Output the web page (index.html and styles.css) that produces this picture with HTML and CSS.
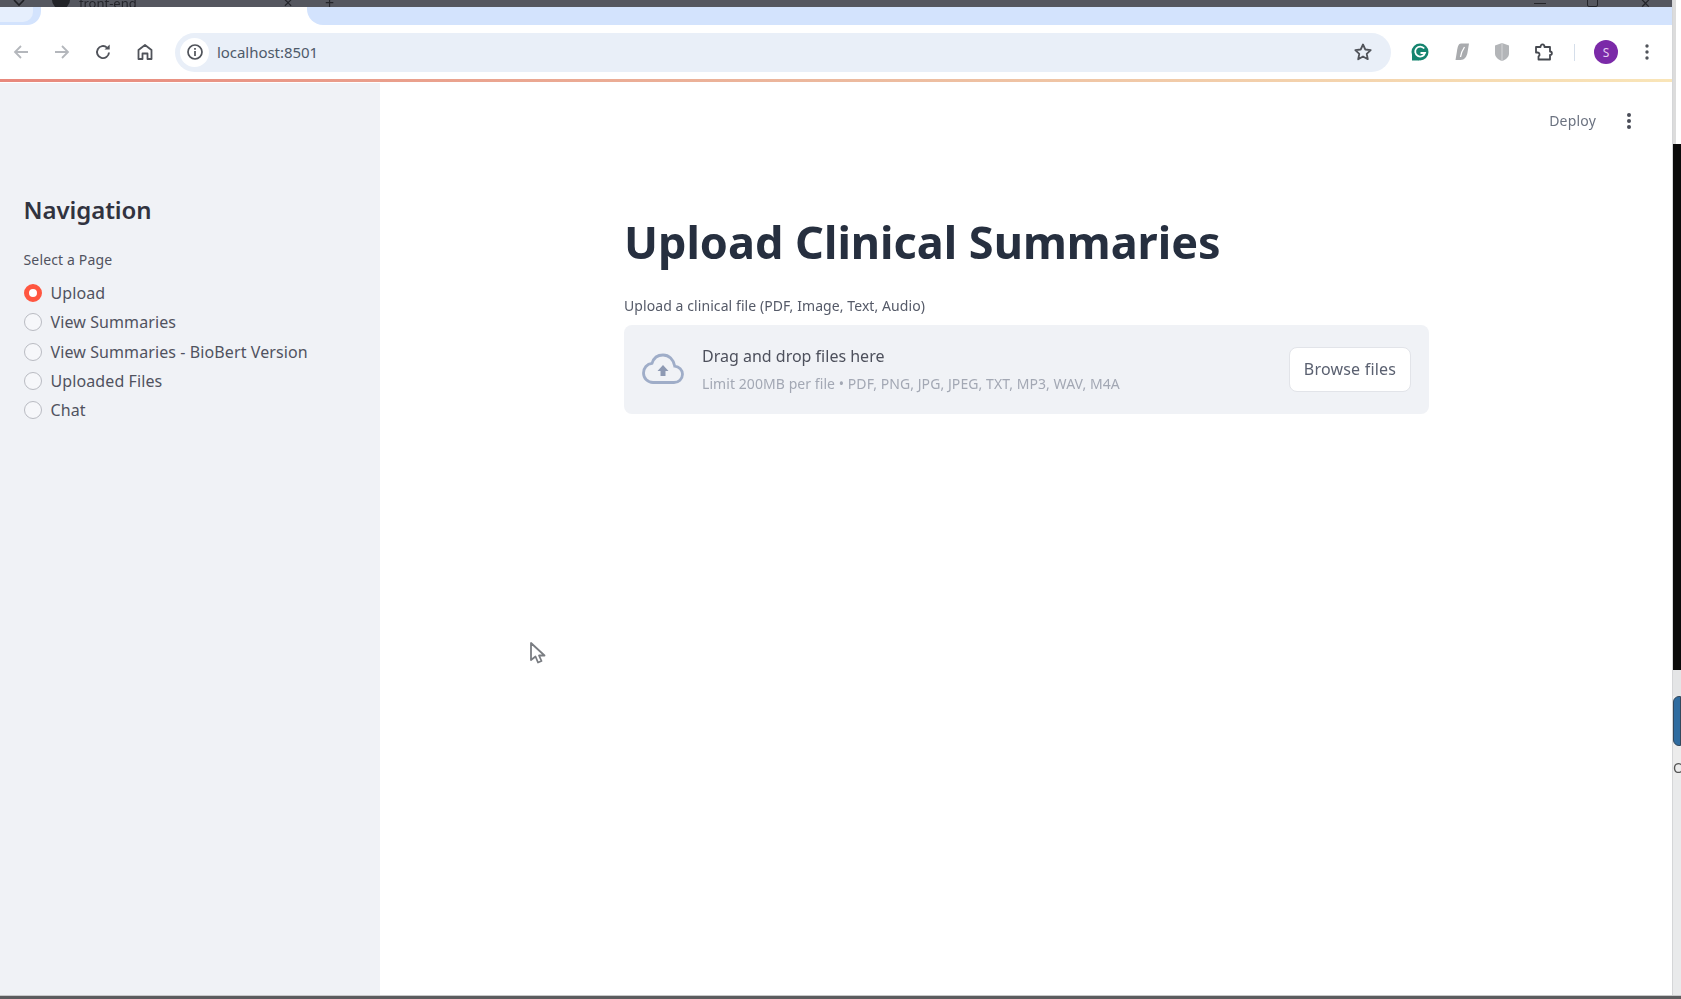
FILE: index.html
```html
<!DOCTYPE html>
<html lang="en">
<head>
<meta charset="utf-8">
<title>front-end</title>
<link rel="stylesheet" href="styles.css">
</head>
<body>
<div class="screen">
  <div class="window">
    <div class="titlebar">
      <svg class="tb-chev" width="14" height="14" viewBox="0 0 14 14"><path d="M2 0l5 5 5-5" fill="none" stroke="#1f2024" stroke-width="1.6"/></svg>
      <span class="tb-fav"></span>
      <span class="tb-name">front-end</span>
      <span class="tb-x">✕</span>
      <span class="tb-plus">+</span>
      <span class="tb-spacer"></span>
      <span class="tb-min"></span>
      <span class="tb-max"></span>
      <span class="tb-close">✕</span>
    </div>
    <div class="tabstrip">
      <div class="tab-left"><span class="tab-left-inner"></span></div>
      <div class="tab-active"></div>
      <div class="tab-rest"></div>
    </div>
    <div class="toolbar">
      <svg class="ic ic-back" width="18" height="18" viewBox="0 0 18 18"><path d="M16 9H3M9 3L3 9l6 6" fill="none" stroke="#b4b7bc" stroke-width="1.8"/></svg>
      <svg class="ic ic-fwd" width="18" height="18" viewBox="0 0 18 18"><path d="M2 9h13M9 3l6 6-6 6" fill="none" stroke="#b4b7bc" stroke-width="1.8"/></svg>
      <svg class="ic ic-reload" width="18" height="18" viewBox="0 0 18 18"><path d="M15 9.500A6 6 0 1 1 13 4.600" fill="none" stroke="#50535a" stroke-width="1.900"/><path d="M10.500 6.600h5.200V1.400z" fill="#50535a"/></svg>
      <svg class="ic ic-home" width="18" height="18" viewBox="0 0 18 18"><path d="M2.500 16V7L9 2l6.500 5v9h-4v-5.500h-5V16z" fill="none" stroke="#50535a" stroke-width="1.800" stroke-linejoin="round"/></svg>
      <div class="omnibox">
        <span class="site-info"><svg width="18" height="18" viewBox="0 0 18 18"><circle cx="9" cy="9" r="7" fill="none" stroke="#50535a" stroke-width="1.700"/><path d="M9 8v5M9 5v1.700" stroke="#50535a" stroke-width="1.700"/></svg></span>
        <span class="url">localhost:8501</span>
        <svg class="star" width="20" height="20" viewBox="0 0 20 20"><path d="M10 2.500l2.300 5 5.400.6-4 3.700 1.100 5.400L10 14.500l-4.800 2.700 1.100-5.400-4-3.700 5.400-.6z" fill="none" stroke="#50535a" stroke-width="1.800" stroke-linejoin="round"/></svg>
      </div>
      <div class="extensions">
        <svg class="ext-g" width="20" height="20" viewBox="0 0 20 20"><circle cx="10" cy="10" r="8.500" fill="#15846f"/><path d="M2 18.500h7V12H2z" fill="#15846f"/><path d="M14.200 6.500A5 5 0 1 0 15 11h-4.500" fill="none" stroke="#fff" stroke-width="1.800"/></svg>
        <svg class="ext-s" width="16" height="20" viewBox="0 0 16 20"><path d="M7 1.500h8l-1.500 9c-.6 4-3 7.500-7 7.500H1.500L3 9c.6-4 1.500-7.500 4-7.500z" fill="#a9abae"/><path d="M10.500 5C8.500 8 7 11 6.500 15" fill="none" stroke="#fff" stroke-width="1.300"/></svg>
        <svg class="ext-h" width="16" height="20" viewBox="0 0 16 20"><path d="M8 1l7 2.500v8c0 3.500-3 6-7 7.500-4-1.500-7-4-7-7.500v-8z" fill="#b3b5b8"/><path d="M8 1v18" stroke="#d4d5d7" stroke-width="1"/></svg>
        <svg class="ext-p" width="20" height="20" viewBox="0 0 20 20"><path d="M2 5h4.500c0-3.500 4-3.500 4 0H16v4.500c2.500 0 2.500 3.500 0 3.500v4.500H4.500v-3c2-1.500 1-4-1-4H2z" fill="none" stroke="#45484f" stroke-width="1.800" stroke-linejoin="round"/></svg>
        <span class="tb-divider"></span>
        <span class="avatar">S</span>
        <svg class="kebab" width="6" height="18" viewBox="0 0 6 18"><circle cx="3" cy="3" r="1.700" fill="#50535a"/><circle cx="3" cy="9" r="1.700" fill="#50535a"/><circle cx="3" cy="15" r="1.700" fill="#50535a"/></svg>
      </div>
    </div>
    <div class="decoration"></div>
    <div class="app">
      <aside class="sidebar">
        <h2 class="nav-title">Navigation</h2>
        <p class="nav-label">Select a Page</p>
        <ul class="radio-list">
          <li class="radio-item selected"><span class="radio"></span>Upload</li>
          <li class="radio-item"><span class="radio"></span>View Summaries</li>
          <li class="radio-item"><span class="radio"></span>View Summaries - BioBert Version</li>
          <li class="radio-item"><span class="radio"></span>Uploaded Files</li>
          <li class="radio-item"><span class="radio"></span>Chat</li>
        </ul>
      </aside>
      <main class="content">
        <header class="app-header">
          <span class="deploy">Deploy</span>
          <svg class="app-menu" width="6" height="18" viewBox="0 0 6 18"><circle cx="3" cy="3" r="2" fill="#4a4d58"/><circle cx="3" cy="9" r="2" fill="#4a4d58"/><circle cx="3" cy="15" r="2" fill="#4a4d58"/></svg>
        </header>
        <section class="block">
          <h1 class="page-title">Upload Clinical Summaries</h1>
          <p class="file-label">Upload a clinical file (PDF, Image, Text, Audio)</p>
          <div class="dropzone">
            <svg class="cloud" width="42" height="32" viewBox="0 0 42 32"><path d="M11 29.500h21c4.500 0 8.500-3.500 8.500-8.200 0-4.500-3.400-7.800-7.800-8.200C31.500 6.500 27 2 21 2c-5.500 0-9.500 3.500-11 8.300C5 10.800 1.500 15 1.500 20c0 5.500 4.300 9.500 9.500 9.500z" fill="none" stroke="#9fadc8" stroke-width="2.800"/><path d="M21 12l-5.500 6H18.500v5h5v-5h3z" fill="#8d99b3"/></svg>
            <div class="drop-text">
              <span class="drop-main">Drag and drop files here</span>
              <span class="drop-sub">Limit 200MB per file • PDF, PNG, JPG, JPEG, TXT, MP3, WAV, M4A</span>
            </div>
            <button class="browse" type="button">Browse files</button>
          </div>
        </section>
        <svg class="cursor" width="18" height="24" viewBox="0 0 18 24"><path d="M2 2v17l4.500-3.500L9 21.500l3.500-1.500-2.500-5.500h5.500z" fill="#fff" stroke="#7a7d82" stroke-width="1.800" stroke-linejoin="round"/></svg>
      </main>
    </div>
  </div>
  <div class="edge">
    <div class="edge-white"></div>
    <div class="edge-black"></div>
    <div class="edge-grey1"></div>
    <div class="edge-blue"></div>
    <div class="edge-text">O</div>
    <div class="edge-grey2"></div>
  </div>
</div>
<div class="taskbar"></div>
</body>
</html>
```

FILE: styles.css
```css
* { box-sizing: border-box; }
html, body { margin: 0; height: 100%; overflow: hidden; }
body {
  display: flex;
  flex-direction: column;
  background: #fff;
  font-family: "Noto Sans", "Liberation Sans", sans-serif;
  color: #31333f;
}
.screen { flex: 1; display: flex; min-height: 0; filter: blur(.45px); }
.window { flex: 1; display: flex; flex-direction: column; min-width: 0; border-right: 1px solid #d5d6d8; }
.taskbar { height: 4px; background: #5c5c5e; border-top: 1px solid #c8c9ca; }

.titlebar {
  height: 7px;
  background: #55575f;
  display: flex;
  align-items: flex-start;
  overflow: hidden;
  position: relative;
  font-size: 13px;
  color: #24252a;
  line-height: 8px;
}
.tb-chev { margin: 0 0 0 12px; flex: none; }
.tb-fav { width: 18px; height: 18px; border-radius: 50%; background: #222327; margin: -9px 0 0 26px; flex: none; }
.tb-name { margin-left: 9px; margin-top: -1px; width: 204px; }
.tb-x { font-size: 12px; margin-top: -1px; width: 42px; }
.tb-plus { font-size: 16px; margin-top: -1px; }
.tb-spacer { flex: 1; }
.tb-min { width: 12px; height: 1px; background: #24252a; margin: 3px 41px 0 0; }
.tb-max { width: 11px; height: 9px; margin: -2px 42px 0 0; border: 1px solid #24252a; border-radius: 2px; }
.tb-close { font-size: 13px; margin: -1px 21px 0 0; }

.tabstrip { height: 18px; display: flex; background: #fff; }
.tab-left { width: 41px; background: #d3e3fd; border-bottom-right-radius: 14px; display: flex; align-items: flex-start; }
.tab-left-inner { width: 33px; height: 15px; background: #e6effd; border-bottom-right-radius: 10px; }
.tab-active { width: 266px; background: #fff; }
.tab-rest { flex: 1; background: #d3e3fd; border-bottom-left-radius: 16px; }

.toolbar {
  height: 54px;
  background: #fff;
  display: flex;
  align-items: center;
  padding-left: 12px;
}
.ic { flex: none; }
.ic-fwd { margin-left: 23px; }
.ic-reload { margin-left: 23px; }
.ic-home { margin-left: 24px; }
.omnibox {
  margin-left: 21px;
  width: 1216px;
  height: 39px;
  border-radius: 20px;
  background: #e9eff8;
  display: flex;
  align-items: center;
  padding: 0 18px 0 5px;
}
.site-info { width: 29px; height: 29px; border-radius: 50%; background: #fff; display: flex; align-items: center; justify-content: center; flex: none; }
.url { margin-left: 8px; font-size: 15px; color: #4e5a6a; flex: 1; letter-spacing: -.05px; }
.star { flex: none; }
.extensions { display: flex; align-items: center; flex: 1; }
.ext-g { margin-left: 19px; flex: none; }
.ext-s { margin-left: 24px; flex: none; }
.ext-h { margin-left: 24px; flex: none; }
.ext-p { margin-left: 24px; flex: none; }
.tb-divider { width: 1px; height: 17px; background: #d5deea; margin-left: 20px; flex: none; }
.avatar { width: 24px; height: 24px; border-radius: 50%; background: #7b2aa8; color: #e6cdf2; font-size: 12px; display: flex; align-items: center; justify-content: center; margin-left: 19px; flex: none; }
.kebab { margin-left: 26px; flex: none; }

.decoration { height: 3px; margin-bottom: 1px; background: linear-gradient(90deg, #e8887c, #ecb99e 50%, #f9e5b8); flex: none; }

.app { flex: 1; display: flex; min-height: 0; }
.sidebar { width: 380px; flex: none; background: #f0f2f6; padding: 111px 24px 0 23.5px; }
.nav-title { margin: 0; font-size: 24px; line-height: 32px; font-weight: 600; color: #31333f; letter-spacing: -.07px; }
.nav-label { margin: 24.4px 0 0; font-size: 14px; line-height: 20px; color: #50525f; letter-spacing: .15px; }
.radio-list { list-style: none; margin: 8px 0 0; padding: 0; }
.radio-item { display: flex; align-items: center; height: 29.3px; font-size: 16px; color: #50525f; letter-spacing: .1px; }
.radio { width: 18px; height: 18px; border-radius: 50%; background: #f6f7fa; border: 1.500px solid #b9bbc2; margin-right: 9px; flex: none; }
.selected .radio { background: #fff; border: 5px solid #ff5640; }

.content { flex: 1; min-width: 0; position: relative; }
.app-header { display: flex; justify-content: flex-end; align-items: center; height: 30px; margin-top: 22.500px; padding-right: 40px; }
.deploy { font-size: 14px; color: #6b7280; letter-spacing: .2px; margin-right: 30px; }
.block { margin: 0 0 0 244px; width: 805px; }
.page-title { margin: 80.500px 0 0; font-size: 45px; line-height: 52px; font-weight: 700; color: #262f3f; white-space: nowrap; }
.file-label { margin: 27.500px 0 0; font-size: 14px; line-height: 20px; color: #555a68; letter-spacing: .08px; }
.dropzone { margin-top: 9px; height: 89px; border-radius: 8px; background: #f0f2f6; display: flex; align-items: center; padding: 0 18px 0 18px; }
.cloud { flex: none; }
.drop-text { flex: 1; display: flex; flex-direction: column; margin-left: 18px; gap: 7px; padding-top: 1px; }
.drop-main { font-size: 16px; line-height: 21px; color: #4d505c; }
.drop-sub { font-size: 14px; line-height: 20px; color: #a3a8b4; letter-spacing: .07px; }
.browse { width: 122px; height: 45px; background: #fff; border: 1px solid #e2e4e9; border-radius: 8px; font: inherit; font-size: 16px; color: #5a6070; letter-spacing: .2px; }
.cursor { position: absolute; left: 149px; top: 558px; }

.edge { width: 8px; flex: none; display: flex; flex-direction: column; background: #ececec; }
.edge-white { height: 144px; background: #fff; border-left: 3px solid #dcdcdc; }
.edge-black { height: 526px; background: #0a0a0a; }
.edge-grey1 { height: 26px; background: #e4e5e6; }
.edge-blue { height: 50px; background: #2f6ca0; border-radius: 6px 0 0 6px; border: 1px solid #33485c; }
.edge-text { height: 34px; font-size: 14px; line-height: 44px; color: #555; overflow: hidden; }
.edge-grey2 { flex: 1; background: #e9eaeb; }
```
